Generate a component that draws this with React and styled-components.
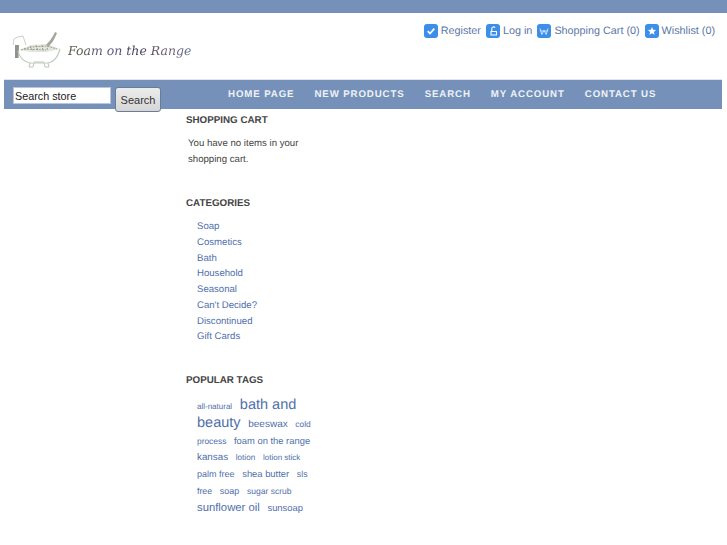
import React from 'react';
import styled, { createGlobalStyle } from 'styled-components';

const GlobalStyle = createGlobalStyle`
    html, body {
        margin: 0;
        padding: 0;
        background: #fff;
    }
    body {
        font-family: "Liberation Sans", Arial, sans-serif;
        font-size: 9.6px;
        color: #444;
        text-rendering: geometricPrecision;
    }
`;

const TopStrip = styled.div`
    height: 13px;
    background: #7591b9;
`;

const Header = styled.div`
    height: 66px;
    padding: 0 12px 0 10px;
    display: flex;
    justify-content: space-between;
    align-items: flex-start;
`;

const Logo = styled.div`
    display: flex;
    align-items: flex-start;
    padding-top: 17px;
`;

const LogoText = styled.span`
    font-family: "DejaVu Serif", serif;
    font-style: italic;
    font-size: 12.5px;
    line-height: 17px;
    width: 124px;
    margin: 12px 0 0 6px;
    white-space: nowrap;
    background: linear-gradient(90deg, #5f5c40, #5f5a85 35%, #3f3c58 55%, #75606f 80%, #587290);
    -webkit-background-clip: text;
    background-clip: text;
    color: transparent;
`;

const HeaderLinks = styled.div`
    display: flex;
    align-items: flex-start;
    gap: 5px;
    padding-top: 10px;
`;

const HeaderLink = styled.a`
    display: flex;
    align-items: flex-start;
    gap: 3px;
    color: #5a77a8;
    font-size: 10.8px;
    line-height: 17px;
    white-space: nowrap;
`;

const IconTile = styled.span`
    width: 14px;
    height: 14px;
    margin-top: 1px;
    border-radius: 3px;
    background: #3b8fe8;
    display: flex;
    align-items: center;
    justify-content: center;
`;

const NavBar = styled.div`
    margin: 0 5px 0 4px;
    height: 29px;
    border-top: 1px solid #dfe5ee;
    background: #7591b9;
    display: flex;
    align-items: flex-start;
`;

const SearchForm = styled.form`
    width: 213px;
    flex: none;
    display: flex;
    align-items: flex-start;
    padding: 7px 0 0 9px;
    gap: 4px;
    box-sizing: border-box;
`;

const SearchInput = styled.input`
    width: 98px;
    height: 17px;
    box-sizing: border-box;
    border: 1px solid #b9c6da;
    padding: 0 1px;
    font-family: "Liberation Sans", Arial, sans-serif;
    font-size: 10.8px;
    color: #222;
    background: #fff;
    &::placeholder {
        color: #222;
        opacity: 1;
    }
`;

const SearchButton = styled.button`
    width: 46px;
    height: 25px;
    box-sizing: border-box;
    padding: 0;
    border: 1px solid #6b7c96;
    border-radius: 3px;
    background: linear-gradient(#ececec, #d6d6d6);
    font-family: "Liberation Sans", Arial, sans-serif;
    font-size: 11px;
    color: #333;
`;

const NavItems = styled.nav`
    display: flex;
    gap: 20px;
    padding-left: 11px;
`;

const NavItem = styled.a`
    color: #eef2f7;
    font-size: 9.7px;
    font-weight: bold;
    letter-spacing: 0.88px;
    line-height: 29px;
    white-space: nowrap;
`;

const Main = styled.div`
    padding: 4.5px 0 0 186px;
    width: 140px;
`;

const Block = styled.div`
    margin-bottom: 29px;
`;

const Title = styled.div`
    font-size: 9.8px;
    font-weight: bold;
    line-height: 14px;
    color: #444;
`;

const CartNote = styled.p`
    margin: 8px 0 0 2px;
    width: 118px;
    font-size: 9.65px;
    line-height: 16px;
    color: #444;
`;

const CategoryList = styled.ul`
    list-style: none;
    margin: 8.5px 0 0;
    padding: 0 0 0 11px;
`;

const CategoryItem = styled.li`
    font-size: 9.6px;
    line-height: 15.75px;
    color: #4f70aa;
`;

const TagCloud = styled.div`
    margin: 8.5px 0 0 11px;
    width: 122px;
    line-height: 16px;
`;

const Tag = styled.a`
    font-size: ${p => p.$size}px;
    color: #4f70aa;
    margin-right: 5px;
`;

const tags = [
    ['all-natural', 8],
    ['bath and beauty', 14.5],
    ['beeswax', 10],
    ['cold process', 8.4],
    ['foam on the range', 9.4],
    ['kansas', 9.8],
    ['lotion', 8.2],
    ['lotion stick', 8],
    ['palm free', 9],
    ['shea butter', 9.4],
    ['sls free', 8.8],
    ['soap', 9],
    ['sugar scrub', 8.5],
    ['sunflower oil', 11.3],
    ['sunsoap', 9.4],
];

const categories = ['Soap', 'Cosmetics', 'Bath', 'Household', 'Seasonal', "Can't Decide?", 'Discontinued', 'Gift Cards'];

const links = [
    {
        label: 'Register',
        icon: <path d="M3.8 7.2l2.2 2.3 4.3-4.8" fill="none" stroke="#fff" strokeWidth="1.8" />,
    },
    {
        label: 'Log in',
        icon: <path d="M5 7.5h5.500v3.500H5zM5.800 7.500V4.500a1.700 1.700 0 0 1 3.200-.7" fill="none" stroke="#fff" strokeWidth="1.1" />,
    },
    {
        label: 'Shopping Cart (0)',
        icon: <path d="M3 4.500l1.800 6 2.200-4 2.200 4L11 4.500M3.500 7h7" fill="none" stroke="#dcebfb" strokeWidth="0.9" />,
    },
    {
        label: 'Wishlist (0)',
        icon: <path d="M7 3l1.200 2.700 2.900.3-2.200 1.900.7 2.900L7 9.300l-2.600 1.500.7-2.900L2.900 6l2.900-.3z" fill="#fff" />,
    },
];

function BathLogo() {
    return (
        <svg width="52" height="38" viewBox="0 0 52 38" fill="none">
            {/* head and towel */}
            <path d="M3 15l1-6 4-2 5-1 3 9" stroke="#c5cdbb" strokeWidth="0.9" />
            <path d="M5 15h4l-.5 13H5z" fill="#8f9489" />
            {/* foam */}
            <path d="M9 20l12-5 16-1 13 5-14 3-15 0z" fill="#e3e6dc" />
            <path d="M11 20l10-3 16-1 10 3M14 19l22 1M20 16l3 5M26 15l2 6M32 15l1 6M38 15l-1 6" stroke="#8c9282" strokeWidth="0.8" strokeDasharray="2 1" />
            {/* tail */}
            <path d="M36 15c3-3 6-7 9-13l2 1c-2 5-4 9-8 13z" fill="#a3a89c" />
            {/* tub */}
            <path d="M8 21c1 6 6 11 12 12h18c6-1 10-6 12-14" stroke="#c3ccc0" strokeWidth="1.2" />
            <path d="M20 33l-1 4h4l1-4M38 33l1 4h-4l-1-4M24 32h10" stroke="#bdc6b9" strokeWidth="1" />
        </svg>
    );
}

export default function App() {
    return (
        <>
            <GlobalStyle />
            <TopStrip />
            <Header>
                <Logo>
                    <BathLogo />
                    <LogoText>Foam on the Range</LogoText>
                </Logo>
                <HeaderLinks>
                    {links.map(({ label, icon }) => (
                        <HeaderLink key={label}>
                            <IconTile>
                                <svg width="14" height="14" viewBox="0 0 14 14">{icon}</svg>
                            </IconTile>
                            {label}
                        </HeaderLink>
                    ))}
                </HeaderLinks>
            </Header>
            <NavBar>
                <SearchForm onSubmit={e => e.preventDefault()}>
                    <SearchInput placeholder="Search store" />
                    <SearchButton>Search</SearchButton>
                </SearchForm>
                <NavItems>
                    {['HOME PAGE', 'NEW PRODUCTS', 'SEARCH', 'MY ACCOUNT', 'CONTACT US'].map(item => (
                        <NavItem key={item}>{item}</NavItem>
                    ))}
                </NavItems>
            </NavBar>
            <Main>
                <Block>
                    <Title>SHOPPING CART</Title>
                    <CartNote>You have no items in your shopping cart.</CartNote>
                </Block>
                <Block>
                    <Title>CATEGORIES</Title>
                    <CategoryList>
                        {categories.map(c => <CategoryItem key={c}>{c}</CategoryItem>)}
                    </CategoryList>
                </Block>
                <Block>
                    <Title>POPULAR TAGS</Title>
                    <TagCloud>
                        {tags.map(([name, size]) => (
                            <React.Fragment key={name}>
                                <Tag $size={size}>{name}</Tag>{' '}
                            </React.Fragment>
                        ))}
                    </TagCloud>
                </Block>
            </Main>
        </>
    );
}
